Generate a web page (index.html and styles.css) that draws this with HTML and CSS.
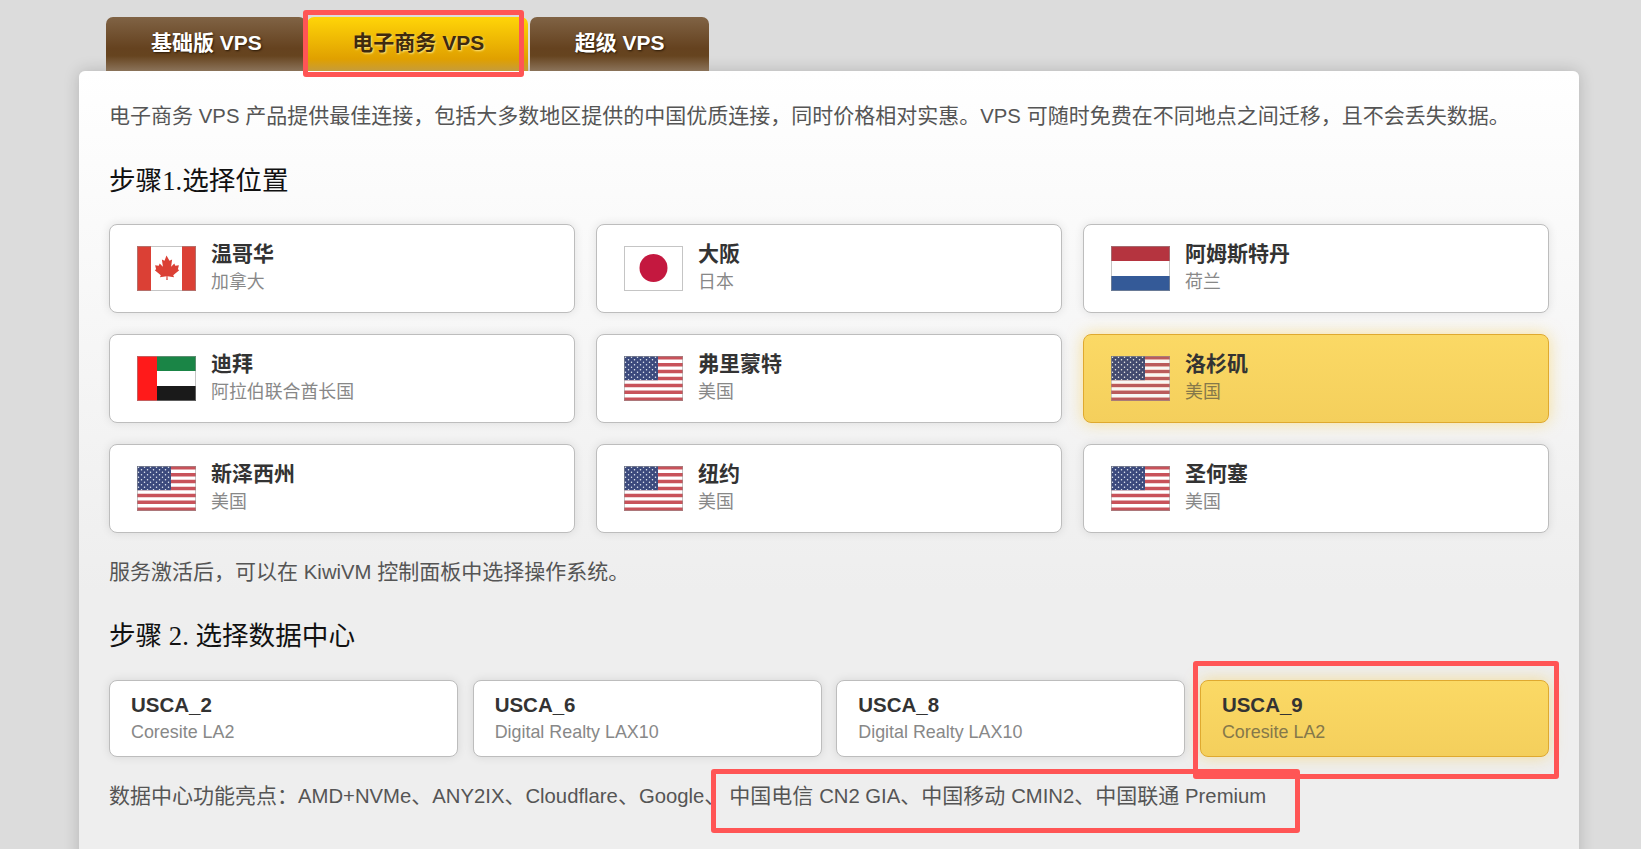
FILE: index.html
```html
<!DOCTYPE html>
<html lang="zh-CN">
<head>
<meta charset="utf-8">
<title>VPS</title>
<link rel="stylesheet" href="styles.css">
</head>
<body>
<svg class="defs" aria-hidden="true">
  <defs>
    <pattern id="stars" width="6" height="5" patternUnits="userSpaceOnUse">
      <circle cx="1.5" cy="1.2" r=".75" fill="#e8ecf4"/>
      <circle cx="4.5" cy="3.7" r=".75" fill="#e8ecf4"/>
    </pattern>
    <symbol id="us" viewBox="0 0 59 45">
      <rect width="59" height="45" fill="#fff"/>
      <path fill="#c8525a" d="M0 0h59v3.46H0zM0 6.92h59v3.46H0zM0 13.85h59v3.46H0zM0 20.77h59v3.46H0zM0 27.69h59v3.46H0zM0 34.62h59v3.46H0zM0 41.54h59V45H0z"/>
      <rect width="34" height="24.2" fill="#3c4a7d"/>
      <rect width="34" height="24.2" fill="url(#stars)"/>
    </symbol>
    <symbol id="ca" viewBox="0 0 59 45">
      <rect width="59" height="45" fill="#fff"/>
      <rect width="14" height="45" fill="#db4035"/>
      <rect x="45" width="14" height="45" fill="#db4035"/>
      <path fill="#db4035" d="M29.5 9.5l3 5.3 2.6-1.4-1 7.4 3.2-3.2 1 2.2 3.6-.6-1 4 1.3 1-6 5 .9 2.1-6.6-1 .2 3.8h-1.4l.2-3.8-6.6 1 .9-2.1-6-5 1.3-1-1-4 3.6.6 1-2.2 3.2 3.2-1-7.4 2.6 1.4z"/>
    </symbol>
    <symbol id="jp" viewBox="0 0 59 45">
      <rect width="59" height="45" fill="#fff"/>
      <circle cx="29.5" cy="22" r="14" fill="#c4183f"/>
    </symbol>
    <symbol id="nl" viewBox="0 0 59 45">
      <rect width="59" height="15" fill="#b5343f"/>
      <rect y="15" width="59" height="15" fill="#fff"/>
      <rect y="30" width="59" height="15" fill="#345a98"/>
    </symbol>
    <symbol id="ae" viewBox="0 0 59 45">
      <rect x="20" width="39" height="15" fill="#1a8546"/>
      <rect x="20" y="15" width="39" height="15" fill="#fff"/>
      <rect x="20" y="30" width="39" height="15" fill="#1a1a1a"/>
      <rect width="20" height="45" fill="#ff1a1a"/>
    </symbol>
  </defs>
</svg>

<div class="page">
  <nav class="tabs">
    <a class="tab">基础版 VPS</a>
    <a class="tab tab-active">电子商务 VPS</a>
    <a class="tab">超级 VPS</a>
  </nav>

  <main class="panel">
    <p class="intro">电子商务 <span class="lat">VPS</span> 产品提供最佳连接，包括大多数地区提供的中国优质连接，同时价格相对实惠。<span class="lat">VPS</span> 可随时免费在不同地点之间迁移，且不会丢失数据。</p>

    <h2 class="step step-one">步骤1.选择位置</h2>
    <div class="locations">
      <div class="card loc">
        <svg class="flag"><use href="#ca"/></svg>
        <div class="loc-text"><div class="name">温哥华</div><div class="sub">加拿大</div></div>
      </div>
      <div class="card loc">
        <svg class="flag"><use href="#jp"/></svg>
        <div class="loc-text"><div class="name">大阪</div><div class="sub">日本</div></div>
      </div>
      <div class="card loc">
        <svg class="flag"><use href="#nl"/></svg>
        <div class="loc-text"><div class="name">阿姆斯特丹</div><div class="sub">荷兰</div></div>
      </div>
      <div class="card loc">
        <svg class="flag"><use href="#ae"/></svg>
        <div class="loc-text"><div class="name">迪拜</div><div class="sub">阿拉伯联合酋长国</div></div>
      </div>
      <div class="card loc">
        <svg class="flag"><use href="#us"/></svg>
        <div class="loc-text"><div class="name">弗里蒙特</div><div class="sub">美国</div></div>
      </div>
      <div class="card loc selected">
        <svg class="flag"><use href="#us"/></svg>
        <div class="loc-text"><div class="name">洛杉矶</div><div class="sub">美国</div></div>
      </div>
      <div class="card loc">
        <svg class="flag"><use href="#us"/></svg>
        <div class="loc-text"><div class="name">新泽西州</div><div class="sub">美国</div></div>
      </div>
      <div class="card loc">
        <svg class="flag"><use href="#us"/></svg>
        <div class="loc-text"><div class="name">纽约</div><div class="sub">美国</div></div>
      </div>
      <div class="card loc">
        <svg class="flag"><use href="#us"/></svg>
        <div class="loc-text"><div class="name">圣何塞</div><div class="sub">美国</div></div>
      </div>
    </div>
    <p class="note note-os">服务激活后，可以在 <span class="lat">KiwiVM</span> 控制面板中选择操作系统。</p>

    <h2 class="step step-two">步骤 2. 选择数据中心</h2>
    <div class="datacenters">
      <div class="card dc"><div class="name">USCA_2</div><div class="sub">Coresite LA2</div></div>
      <div class="card dc"><div class="name">USCA_6</div><div class="sub">Digital Realty LAX10</div></div>
      <div class="card dc"><div class="name">USCA_8</div><div class="sub">Digital Realty LAX10</div></div>
      <div class="card dc selected"><div class="name">USCA_9</div><div class="sub">Coresite LA2</div></div>
    </div>
    <p class="note note-dc">数据中心功能亮点：<span class="lat">AMD+NVMe</span>、<span class="lat">ANY2IX</span>、<span class="lat">Cloudflare</span>、<span class="lat">Google</span>、<span class="after-mark">中国电信</span> <span class="lat">CN2 GIA</span>、中国移动 <span class="lat">CMIN2</span>、中国联通 <span class="lat">Premium</span></p>
  </main>
</div>

<div class="mark mark-tab"></div>
<div class="mark mark-dc"></div>
<div class="mark mark-note"></div>
</body>
</html>
```

FILE: styles.css
```css
* {
  box-sizing: border-box;
}

html,
body {
  margin: 0;
  height: 849px;
  overflow: hidden;
}

body {
  position: relative;
  background: #dcdcdc;
  color: #555;
  font-family: "Liberation Sans", "Noto Sans CJK SC", sans-serif;
}

.defs {
  position: absolute;
  width: 0;
  height: 0;
}

.page {
  width: 1500px;
  margin-left: 79px;
  padding-top: 17px;
}

.tabs {
  position: relative;
  z-index: 1;
  display: flex;
  gap: 1.5px;
  padding-left: 27px;
}

.tab {
  height: 54px;
  padding: 0 44px 0 45px;
  border-radius: 7px 7px 0 0;
  background: linear-gradient(#806345 0, #65421f 58%, #66441f 72%, #8b735a 100%);
  color: #fff;
  font-size: 21px;
  font-weight: 700;
  line-height: 52px;
  text-shadow: 1px 1px 2px #2a1a08;
}

.tab-active {
  background: linear-gradient(#ffd508 0, #e0a000 78%, #c69c3a 100%);
  color: #3f2a0e;
  text-shadow: 1px 1px 2px #ffe680;
}

.panel {
  height: 800px;
  padding: 30px 30px 0;
  border-radius: 6px 6px 0 0;
  background: linear-gradient(#fff 0, #eee 520px);
  box-shadow: 0 0 16px rgba(0, 0, 0, .18);
}

.intro,
.note {
  margin: 0;
  font-size: 21px;
  line-height: 30px;
  white-space: nowrap;
}

.lat {
  font-size: 20.3px;
}

.after-mark {
  margin-left: 4px;
}

.step {
  margin: 0;
  color: #111;
  font-family: "Liberation Serif", "Noto Sans CJK SC", serif;
  font-size: 26.6px;
  font-weight: 400;
  line-height: 36px;
}

.step-one {
  margin-top: 32px;
}

.locations {
  display: grid;
  grid-template-columns: repeat(3, 466px);
  grid-auto-rows: 89px;
  gap: 21px;
  margin-top: 25px;
}

.card {
  border: 1px solid #bdbdbd;
  border-radius: 8px;
  background: #fff;
  box-shadow: 0 0 10px rgba(0, 0, 0, .1);
}

.card.selected {
  border-color: #dfa92f;
  background: linear-gradient(#fbd965, #f4cf5c);
  box-shadow: 0 0 16px rgba(247, 208, 92, .6);
}

.loc {
  display: flex;
  align-items: center;
  gap: 15px;
  padding-left: 27px;
}

.loc-text {
  margin-bottom: 2px;
}

.flag {
  flex: none;
  width: 59px;
  height: 45px;
  outline: 1px solid rgba(150, 150, 150, .55);
  outline-offset: -1px;
}

.selected .flag {
  filter: sepia(.2) brightness(.97);
}

.name {
  color: #333;
  font-size: 21px;
  font-weight: 700;
  line-height: 28px;
}

.sub {
  color: #888;
  font-size: 17.9px;
  line-height: 28px;
}

.selected .sub {
  color: #85784a;
}

.note-os {
  margin-top: 24px;
}

.step-two {
  margin-top: 31px;
}

.datacenters {
  display: grid;
  grid-template-columns: repeat(4, 1fr);
  gap: 14.5px;
  margin-top: 26px;
}

.dc {
  height: 77px;
  padding: 9px 0 0 21px;
}

.dc .name {
  font-size: 20.5px;
  line-height: 29px;
}

.dc .sub {
  line-height: 27px;
}

.note-dc {
  margin-top: 24px;
}

.mark {
  position: absolute;
  z-index: 2;
  border: 5px solid #ff5555;
  border-radius: 3px;
}

.mark-tab {
  left: 303px;
  top: 10px;
  width: 221px;
  height: 67px;
}

.mark-dc {
  left: 1193px;
  top: 661px;
  width: 366px;
  height: 118px;
}

.mark-note {
  left: 711px;
  top: 769px;
  width: 589px;
  height: 64px;
}
```
